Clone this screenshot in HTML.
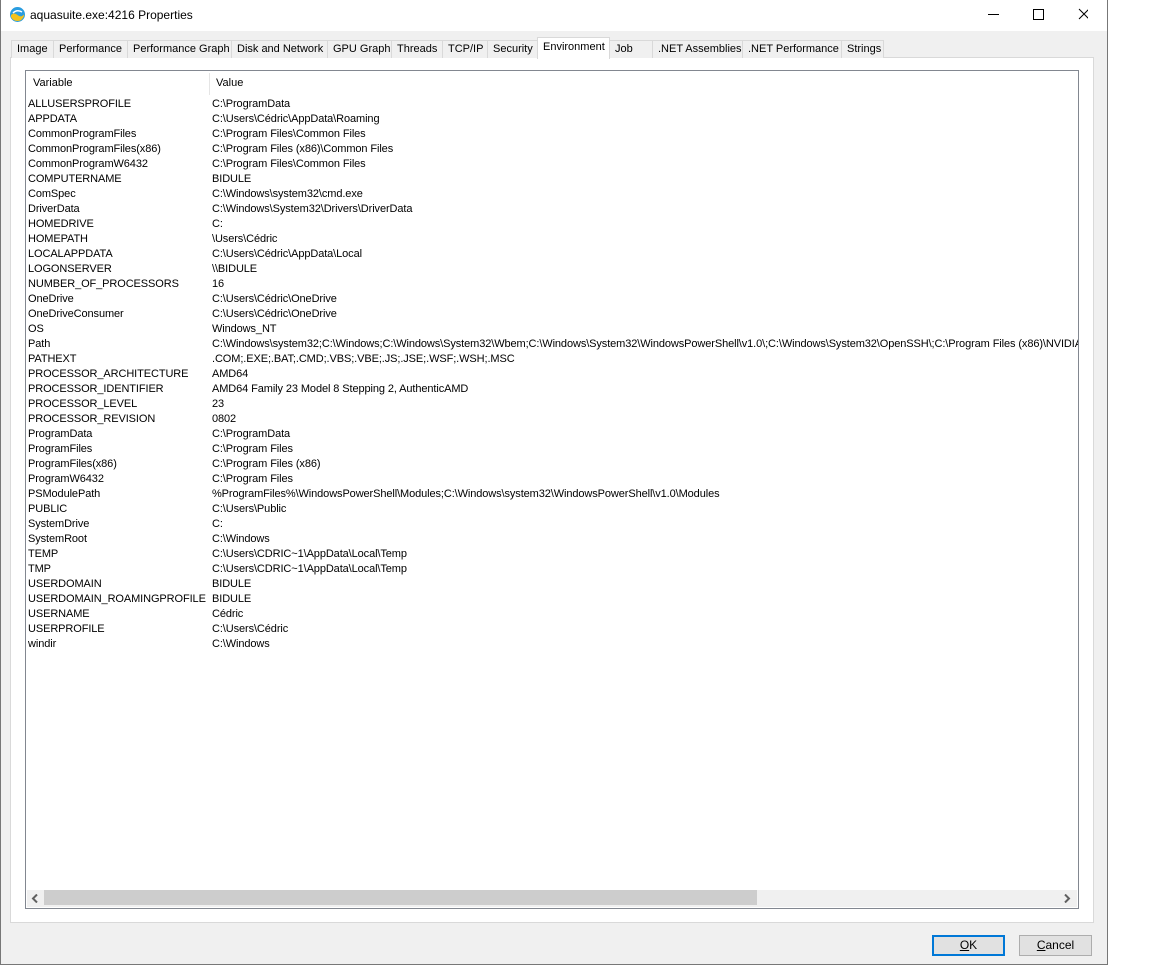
<!DOCTYPE html>
<html><head><meta charset="utf-8"><style>
*{box-sizing:border-box;margin:0;padding:0}
body{width:1152px;height:965px;background:#fff;font-family:"Liberation Sans",Tahoma,sans-serif;font-size:11px;color:#000;position:relative;overflow:hidden}
.win{position:absolute;left:0;top:0;width:1108px;height:965px;background:#f0f0f0;border:1px solid #777}
.in{position:absolute;left:-1px;top:0;width:1108px;height:965px}
.title{position:absolute;left:1px;top:-1px;width:1106px;height:31px;background:#fff}
.title .t{position:absolute;left:29px;top:8px;font-size:12px}
.tab{position:absolute;top:39px;height:18px;border:1px solid #d9d9d9;border-bottom:none;background:#f0f0f0;font-size:11px;line-height:16px;padding-left:5px;white-space:nowrap;overflow:hidden}
.tab.sel{top:36px;height:22px;background:#fff;z-index:3;line-height:18px}
.panel{position:absolute;left:10px;top:56px;width:1084px;height:866px;background:#fff;border:1px solid #d9d9d9}
.list{position:absolute;left:25px;top:69px;width:1054px;height:839px;border:1px solid #828790;background:#fff;overflow:hidden}
.hdr{position:absolute;left:0;top:0;height:25px;width:100%}
.hdr span{position:absolute;top:6px}
.rows{position:absolute;left:2px;top:26px;width:1050px}
.r{height:15px;line-height:15px;white-space:nowrap;position:relative}
.r .a{position:absolute;left:0;letter-spacing:-0.1px}
.r .b{position:absolute;left:184px;letter-spacing:-0.1px}
.sb{position:absolute;left:1px;top:819px;width:1050px;height:17px;background:#f0f0f0}
.thumb{position:absolute;left:17px;top:0;width:713px;height:15px;background:#cdcdcd}
.btn{position:absolute;top:934px;width:73px;height:21px;background:#e1e1e1;border:1px solid #adadad;text-align:center;line-height:19px;font-size:12px}
</style></head><body>
<div class="win"><div class="in">
<div class="title">
<svg style="position:absolute;left:8px;top:6px" width="17" height="17" viewBox="0 0 17 17"><circle cx="8.5" cy="8.5" r="7.5" fill="#2a9de0"/><path d="M2 9 Q5 6 8.5 9 T15 8.5 L15 10 Q13 15 8.5 15 Q4 15 2 11Z" fill="#f3c21b"/><path d="M4 7 Q8 3 13 6" stroke="#fff" stroke-width="1.5" fill="none"/></svg>
<span class="t">aquasuite.exe:4216 Properties</span>
<svg style="position:absolute;left:987px;top:8px" width="100" height="14"><line x1="0" y1="6.5" x2="11" y2="6.5" stroke="#000"/><rect x="45.5" y="1.5" width="10" height="10" fill="none" stroke="#000"/><path d="M91 1 L101 11 M101 1 L91 11" stroke="#000"/></svg>
</div>
<div class="panel"></div>
<div class="tab" style="left:11px;width:43px">Image</div>
<div class="tab" style="left:53px;width:75px">Performance</div>
<div class="tab" style="left:127px;width:105px">Performance Graph</div>
<div class="tab" style="left:231px;width:97px">Disk and Network</div>
<div class="tab" style="left:327px;width:65px">GPU Graph</div>
<div class="tab" style="left:391px;width:52px">Threads</div>
<div class="tab" style="left:442px;width:46px">TCP/IP</div>
<div class="tab" style="left:487px;width:51px">Security</div>
<div class="tab sel" style="left:537px;width:73px">Environment</div>
<div class="tab" style="left:609px;width:44px">Job</div>
<div class="tab" style="left:652px;width:91px">.NET Assemblies</div>
<div class="tab" style="left:742px;width:100px">.NET Performance</div>
<div class="tab" style="left:841px;width:43px">Strings</div>
<div class="list">
<div class="hdr"><span style="left:7px">Variable</span><div style="position:absolute;left:183px;top:2px;width:1px;height:22px;background:#e5e5e5"></div><span style="left:190px">Value</span></div>
<div class="rows">
<div class="r"><span class="a">ALLUSERSPROFILE</span><span class="b">C:\ProgramData</span></div>
<div class="r"><span class="a">APPDATA</span><span class="b">C:\Users\Cédric\AppData\Roaming</span></div>
<div class="r"><span class="a">CommonProgramFiles</span><span class="b">C:\Program Files\Common Files</span></div>
<div class="r"><span class="a">CommonProgramFiles(x86)</span><span class="b">C:\Program Files (x86)\Common Files</span></div>
<div class="r"><span class="a">CommonProgramW6432</span><span class="b">C:\Program Files\Common Files</span></div>
<div class="r"><span class="a">COMPUTERNAME</span><span class="b">BIDULE</span></div>
<div class="r"><span class="a">ComSpec</span><span class="b">C:\Windows\system32\cmd.exe</span></div>
<div class="r"><span class="a">DriverData</span><span class="b">C:\Windows\System32\Drivers\DriverData</span></div>
<div class="r"><span class="a">HOMEDRIVE</span><span class="b">C:</span></div>
<div class="r"><span class="a">HOMEPATH</span><span class="b">\Users\Cédric</span></div>
<div class="r"><span class="a">LOCALAPPDATA</span><span class="b">C:\Users\Cédric\AppData\Local</span></div>
<div class="r"><span class="a">LOGONSERVER</span><span class="b">\\BIDULE</span></div>
<div class="r"><span class="a">NUMBER_OF_PROCESSORS</span><span class="b">16</span></div>
<div class="r"><span class="a">OneDrive</span><span class="b">C:\Users\Cédric\OneDrive</span></div>
<div class="r"><span class="a">OneDriveConsumer</span><span class="b">C:\Users\Cédric\OneDrive</span></div>
<div class="r"><span class="a">OS</span><span class="b">Windows_NT</span></div>
<div class="r"><span class="a">Path</span><span class="b">C:\Windows\system32;C:\Windows;C:\Windows\System32\Wbem;C:\Windows\System32\WindowsPowerShell\v1.0\;C:\Windows\System32\OpenSSH\;C:\Program Files (x86)\NVIDIA Corporation\PhysX\Common</span></div>
<div class="r"><span class="a">PATHEXT</span><span class="b">.COM;.EXE;.BAT;.CMD;.VBS;.VBE;.JS;.JSE;.WSF;.WSH;.MSC</span></div>
<div class="r"><span class="a">PROCESSOR_ARCHITECTURE</span><span class="b">AMD64</span></div>
<div class="r"><span class="a">PROCESSOR_IDENTIFIER</span><span class="b">AMD64 Family 23 Model 8 Stepping 2, AuthenticAMD</span></div>
<div class="r"><span class="a">PROCESSOR_LEVEL</span><span class="b">23</span></div>
<div class="r"><span class="a">PROCESSOR_REVISION</span><span class="b">0802</span></div>
<div class="r"><span class="a">ProgramData</span><span class="b">C:\ProgramData</span></div>
<div class="r"><span class="a">ProgramFiles</span><span class="b">C:\Program Files</span></div>
<div class="r"><span class="a">ProgramFiles(x86)</span><span class="b">C:\Program Files (x86)</span></div>
<div class="r"><span class="a">ProgramW6432</span><span class="b">C:\Program Files</span></div>
<div class="r"><span class="a">PSModulePath</span><span class="b">%ProgramFiles%\WindowsPowerShell\Modules;C:\Windows\system32\WindowsPowerShell\v1.0\Modules</span></div>
<div class="r"><span class="a">PUBLIC</span><span class="b">C:\Users\Public</span></div>
<div class="r"><span class="a">SystemDrive</span><span class="b">C:</span></div>
<div class="r"><span class="a">SystemRoot</span><span class="b">C:\Windows</span></div>
<div class="r"><span class="a">TEMP</span><span class="b">C:\Users\CDRIC~1\AppData\Local\Temp</span></div>
<div class="r"><span class="a">TMP</span><span class="b">C:\Users\CDRIC~1\AppData\Local\Temp</span></div>
<div class="r"><span class="a">USERDOMAIN</span><span class="b">BIDULE</span></div>
<div class="r"><span class="a">USERDOMAIN_ROAMINGPROFILE</span><span class="b">BIDULE</span></div>
<div class="r"><span class="a">USERNAME</span><span class="b">Cédric</span></div>
<div class="r"><span class="a">USERPROFILE</span><span class="b">C:\Users\Cédric</span></div>
<div class="r"><span class="a">windir</span><span class="b">C:\Windows</span></div>
</div>
<div class="sb"><div class="thumb"></div>
<svg style="position:absolute;left:4px;top:4px" width="8" height="9"><path d="M6 0.5 L2 4.5 L6 8.5" stroke="#606060" stroke-width="2" fill="none"/></svg>
<svg style="position:absolute;left:1036px;top:4px" width="8" height="9"><path d="M2 0.5 L6 4.5 L2 8.5" stroke="#606060" stroke-width="2" fill="none"/></svg>
</div>
</div>
<div class="btn" style="left:932px;border:2px solid #0078d7;line-height:17px"><u>O</u>K</div>
<div class="btn" style="left:1019px"><u>C</u>ancel</div>
</div></div>
</body></html>
